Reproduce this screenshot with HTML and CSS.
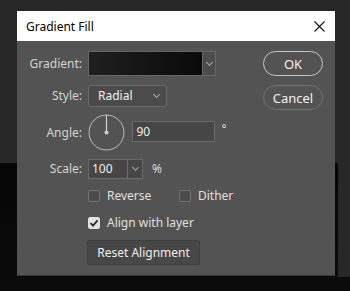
FILE: index.html
```html
<!DOCTYPE html>
<html lang="en">
<head>
    <meta charset="UTF-8">
    <title>Gradient Fill</title>
    <link rel="stylesheet" href="styles.css">
</head>
<body>
    <div class="dialog">
        <div class="titlebar">
            <span class="title">Gradient Fill</span>
            <svg class="close" width="11" height="11" viewBox="0 0 11 11">
                <path d="M0.5 0.5 L10.5 10.5 M10.5 0.5 L0.5 10.5" stroke="#111" stroke-width="1.1" fill="none"/>
            </svg>
        </div>
        <div class="content">
            <div class="form">
                <div class="row row-gradient">
                    <label>Gradient:</label>
                    <div class="swatch">
                        <div class="swatch-fill"></div>
                        <div class="swatch-arrow"><span class="chevron"></span></div>
                    </div>
                </div>
                <div class="row row-style">
                    <label>Style:</label>
                    <div class="select">
                        <span>Radial</span>
                        <span class="chevron"></span>
                    </div>
                </div>
                <div class="row row-angle">
                    <label>Angle:</label>
                    <div class="angle">
                        <svg class="dial" width="37" height="37" viewBox="0 0 37 37">
                            <circle cx="18.5" cy="18.5" r="17.5" stroke="#bdbdbd" stroke-width="1" fill="none"/>
                            <line x1="18.5" y1="1" x2="18.5" y2="18.5" stroke="#d0d0d0" stroke-width="1.2"/>
                            <circle cx="18.5" cy="18.5" r="2" fill="#d0d0d0"/>
                        </svg>
                        <div class="input angle-input">90</div>
                        <span class="unit degree">°</span>
                    </div>
                </div>
                <div class="row row-scale">
                    <label>Scale:</label>
                    <div class="angle">
                        <div class="combo">
                            <span class="combo-value">100</span>
                            <span class="combo-arrow"><span class="chevron"></span></span>
                        </div>
                        <span class="unit">%</span>
                    </div>
                </div>
                <div class="row row-checks">
                    <span></span>
                    <div class="checks">
                        <div class="check check-first"><span class="box"></span>Reverse</div>
                        <div class="check"><span class="box"></span>Dither</div>
                    </div>
                </div>
                <div class="row row-align">
                    <span></span>
                    <div class="check"><span class="box checked">
                        <svg width="10" height="10" viewBox="0 0 10 10">
                            <path d="M1.5 5.2 L4 7.6 L8.6 2.4" stroke="#2a2a2a" stroke-width="1.8" fill="none"/>
                        </svg>
                    </span>Align with layer</div>
                </div>
                <div class="row row-reset">
                    <span></span>
                    <div class="reset">Reset Alignment</div>
                </div>
            </div>
            <div class="actions">
                <div class="btn btn-ok">OK</div>
                <div class="btn btn-cancel">Cancel</div>
            </div>
        </div>
    </div>
</body>
</html>
```

FILE: styles.css
```css
* {
    margin: 0;
    padding: 0;
    box-sizing: border-box;
}

body {
    width: 350px;
    height: 291px;
    overflow: hidden;
    font-family: 'Noto Sans', sans-serif;
    font-size: 12px;
    color: #d6d6d6;
    background:
        linear-gradient(#272727, #272727) right top / 12px 277px no-repeat,
        linear-gradient(to bottom, #282828 163px, #060606 163px, #0b0b0b 100%);
    padding: 11px 0 0 17px;
}

.dialog {
    width: 318px;
    height: 265px;
    background-color: #535353;
    border-bottom: 1px solid #3a3a3a;
}

.titlebar {
    height: 30px;
    background-color: #fff;
    display: flex;
    align-items: center;
    justify-content: space-between;
    padding: 0 10px 0 9px;
}

.title {
    color: #000;
    font-size: 12px;
}

.close {
    display: block;
}

.content {
    display: flex;
    justify-content: space-between;
    padding: 10px 12px 0 0;
}

.row {
    display: grid;
    grid-template-columns: 65px auto;
    column-gap: 6px;
    align-items: center;
    line-height: 14px;
}

label {
    text-align: right;
    color: #d4d4d4;
}

.row-style { margin-top: 9px; }
.row-angle { margin-top: 7px; }
.row-scale { margin-top: 8px; }
.row-checks { margin-top: 11px; height: 12px; }
.row-align { margin-top: 15px; height: 12px; }
.row-reset { margin-top: 11px; }

.chevron {
    display: block;
    width: 5px;
    height: 5px;
    border-right: 1px solid #a8a8a8;
    border-bottom: 1px solid #a8a8a8;
    transform: rotate(45deg);
    margin-top: -3px;
}

.swatch {
    display: flex;
    width: 128px;
    height: 25px;
    border: 1px solid #676767;
}

.swatch-fill {
    flex: 1;
    background: linear-gradient(to right, #1f1f1f, #0a0a0a);
}

.swatch-arrow {
    width: 13px;
    background-color: #4c4c4c;
    border-left: 1px solid #676767;
    display: flex;
    align-items: center;
    justify-content: center;
}

.select {
    width: 79px;
    height: 22px;
    border: 1px solid #696969;
    border-radius: 3px;
    background-color: #4b4b4b;
    display: flex;
    align-items: center;
    justify-content: space-between;
    padding: 0 7px 0 9px;
    color: #f2f2f2;
}

.angle {
    display: flex;
    align-items: center;
}

.dial {
    display: block;
    margin-left: -0.5px;
}

.input {
    background-color: #464646;
    border: 1px solid #6a6a6a;
    color: #eee;
}

.angle-input {
    width: 83px;
    height: 21px;
    margin-left: 7px;
    padding-left: 4px;
    line-height: 19px;
    margin-top: -3px;
}

.unit {
    color: #ddd;
    margin-left: 9px;
}

.degree {
    margin-left: 7px;
    margin-top: -7px;
}

.combo {
    display: flex;
    width: 55px;
    height: 20px;
    background-color: #464646;
    border: 1px solid #6a6a6a;
    color: #eee;
}

.combo-value {
    flex: 1;
    padding-left: 3px;
    line-height: 18px;
}

.combo-arrow {
    width: 15px;
    border-left: 1px solid #6a6a6a;
    display: flex;
    align-items: center;
    justify-content: center;
}

.checks {
    display: flex;
}

.check {
    display: flex;
    align-items: center;
    height: 12px;
    color: #e0e0e0;
}

.check-first {
    width: 91px;
}

.box {
    width: 12px;
    height: 12px;
    border: 1px solid #767676;
    border-radius: 2px;
    background-color: #4b4b4b;
    margin-right: 7px;
    display: flex;
    align-items: center;
    justify-content: center;
}

.box.checked {
    background-color: #e2e2e2;
    border-color: #e2e2e2;
}

.box svg {
    display: block;
}

.reset {
    width: 113px;
    height: 25px;
    margin-left: -1px;
    background-color: #474747;
    border: 1px solid #3f3f3f;
    border-radius: 2px;
    color: #eee;
    display: flex;
    align-items: center;
    justify-content: center;
}

.actions {
    display: flex;
    flex-direction: column;
    gap: 9px;
}

.btn {
    width: 60px;
    height: 25px;
    border-radius: 13px;
    display: flex;
    align-items: center;
    justify-content: center;
    color: #f0f0f0;
    font-size: 13px;
}

.btn-ok {
    border: 1.5px solid #c4c4c4;
}

.btn-cancel {
    border: 1px solid #717171;
}
```
